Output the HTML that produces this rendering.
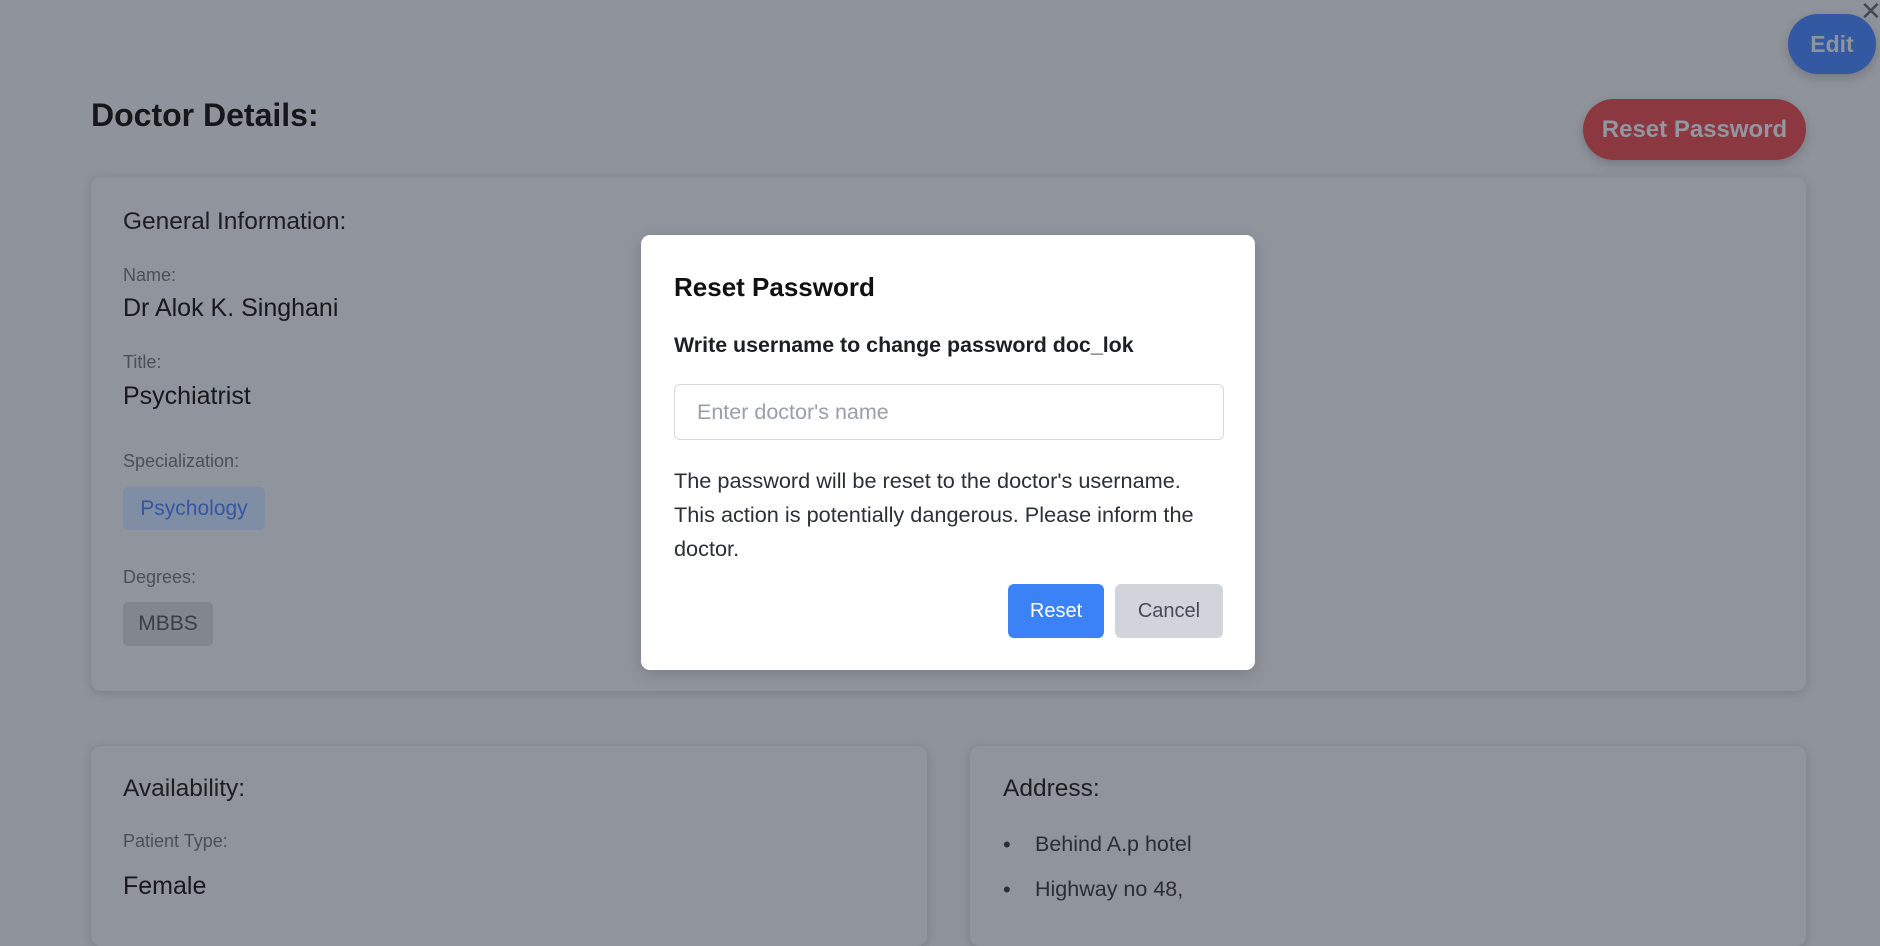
<!DOCTYPE html>
<html><head><meta charset="utf-8"><style>
*{box-sizing:border-box;margin:0;padding:0}
body{width:1880px;height:910px;overflow:hidden;background:#8f939b;font-family:"Liberation Sans",sans-serif;position:relative;color:#1a1c20}
.a{position:absolute;white-space:nowrap}
.card{position:absolute;background:#90959d;border-radius:10px;box-shadow:0 2px 10px rgba(60,64,72,.25)}
.lbl{position:absolute;font-size:18px;color:#4b5058}
.val{position:absolute;font-size:25px;color:#16181c}
.h{position:absolute;font-size:24.5px;color:#1c1e22}
</style></head><body>
<div class="a" style="left:1860px;top:-4px;font-size:26px;color:#44484f">✕</div>
<div class="a" style="left:1788px;top:14px;width:88px;height:60px;border-radius:30px;background:#3259a1;color:#8f949c;font-weight:bold;font-size:23px;line-height:60px;text-align:center;box-shadow:0 4px 10px rgba(60,60,70,.3)">Edit</div>
<div class="a" style="left:91px;top:97px;font-size:32px;font-weight:bold;color:#15171b">Doctor Details:</div>
<div class="a" style="left:1583px;top:99px;width:223px;height:61px;border-radius:31px;background:#8b3840;color:#9296a0;font-weight:bold;font-size:24px;line-height:61px;text-align:center;box-shadow:0 4px 10px rgba(60,60,70,.3)">Reset Password</div>

<div class="card" style="left:91px;top:177px;width:1715px;height:514px"></div>
<div class="h" style="left:123px;top:208px">General Information:</div>
<div class="lbl" style="left:123px;top:265px">Name:</div>
<div class="val" style="left:123px;top:294px">Dr Alok K. Singhani</div>
<div class="lbl" style="left:123px;top:352px">Title:</div>
<div class="val" style="left:123px;top:382px">Psychiatrist</div>
<div class="lbl" style="left:123px;top:451px">Specialization:</div>
<div class="a" style="left:123px;top:487px;width:142px;height:43px;border-radius:5px;background:#7f8da5;color:#3557a0;font-size:21px;line-height:43px;text-align:center">Psychology</div>
<div class="lbl" style="left:123px;top:567px">Degrees:</div>
<div class="a" style="left:123px;top:602px;width:90px;height:44px;border-radius:5px;background:#82878f;color:#3a3e45;font-size:21px;line-height:44px;text-align:center">MBBS</div>

<div class="card" style="left:91px;top:746px;width:836px;height:200px"></div>
<div class="card" style="left:970px;top:746px;width:836px;height:200px"></div>
<div class="h" style="left:123px;top:775px">Availability:</div>
<div class="lbl" style="left:123px;top:831px">Patient Type:</div>
<div class="val" style="left:123px;top:872px">Female</div>
<div class="h" style="left:1003px;top:775px">Address:</div>
<div class="a" style="left:1003px;top:832px;font-size:22px;color:#2a2d32">•</div>
<div class="a" style="left:1035px;top:832px;font-size:21.5px;color:#2a2d32">Behind A.p hotel</div>
<div class="a" style="left:1003px;top:877px;font-size:22px;color:#2a2d32">•</div>
<div class="a" style="left:1035px;top:877px;font-size:21.5px;color:#2a2d32">Highway no 48,</div>

<div class="a" style="left:641px;top:235px;width:614px;height:435px;background:#fff;border-radius:9px;box-shadow:0 4px 16px rgba(0,0,0,.15)">
<div class="a" style="left:33px;top:37px;font-size:26px;font-weight:bold;color:#111">Reset Password</div>
<div class="a" style="left:33px;top:98px;font-size:21.4px;font-weight:bold;color:#1d1f23">Write username to change password doc_lok</div>
<div class="a" style="left:33px;top:149px;width:550px;height:56px;border:1px solid #d5d8dd;border-radius:6px;font-size:21.5px;color:#9a9ea6;line-height:54px;padding-left:22px">Enter doctor's name</div>
<div class="a" style="left:33px;top:229px;font-size:21.7px;line-height:34px;color:#2c2f35;white-space:normal;width:525px">The password will be reset to the doctor's username. This action is potentially dangerous. Please inform the doctor.</div>
<div class="a" style="left:367px;top:349px;width:96px;height:54px;border-radius:6px;background:#3b82f6;color:#fff;font-size:20px;line-height:54px;text-align:center">Reset</div>
<div class="a" style="left:474px;top:349px;width:108px;height:54px;border-radius:6px;background:#d1d5db;color:#464a52;font-size:20px;line-height:54px;text-align:center">Cancel</div>
</div>
</body></html>
